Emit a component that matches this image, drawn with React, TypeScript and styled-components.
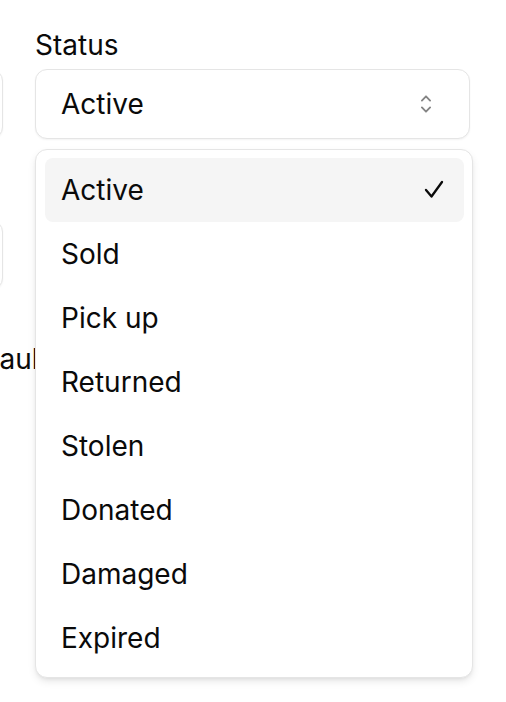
import React from "react";
import styled, { createGlobalStyle } from "styled-components";

const Global = createGlobalStyle`
  html, body {
    margin: 0;
    padding: 0;
    background: #ffffff;
    overflow: hidden;
  }
  body {
    font-family: Inter, "Noto Sans", sans-serif;
    color: #0a0a0a;
    -webkit-font-smoothing: antialiased;
  }
`;

const Form = styled.div`
  display: flex;
  gap: 32px;
  padding-top: 31px;
  width: 506px;
  height: 702px;
  box-sizing: border-box;
`;

const Column = styled.div<{ $width: number; $offset?: number }>`
  display: flex;
  flex-direction: column;
  flex: 0 0 ${(p) => p.$width}px;
  width: ${(p) => p.$width}px;
  margin-left: ${(p) => p.$offset ?? 0}px;
`;

const Field = styled.div<{ $spaceBefore?: number; $spaceAfter?: number }>`
  display: flex;
  flex-direction: column;
  gap: 10px;
  margin-top: ${(p) => p.$spaceBefore ?? 0}px;
  margin-bottom: ${(p) => p.$spaceAfter ?? 0}px;
`;

const Label = styled.label`
  font-size: 28px;
  line-height: 28px;
  font-weight: 400;
  color: #0a0a0a;
`;

const Input = styled.div`
  height: 70px;
  box-sizing: border-box;
  border: 1px solid #e5e5e5;
  border-radius: 12px;
  background: #fff;
  box-shadow: 0 1px 2px rgba(0, 0, 0, 0.05);
`;

const CheckRow = styled.div<{ $indent: number }>`
  padding-left: ${(p) => p.$indent}px;
  font-size: 28px;
  line-height: 48px;
  white-space: nowrap;
`;

const SelectWrap = styled.div`
  position: relative;
`;

const Trigger = styled.button`
  display: flex;
  align-items: center;
  justify-content: space-between;
  width: 100%;
  height: 70px;
  box-sizing: border-box;
  padding: 0 38px 0 25px;
  border: 1px solid #e5e5e5;
  border-radius: 12px;
  background: #fff;
  box-shadow: 0 1px 2px rgba(0, 0, 0, 0.05);
  font-family: Inter, "Noto Sans", sans-serif;
  font-size: 28px;
  color: #0a0a0a;
  text-align: left;
  cursor: pointer;
`;

const Menu = styled.div`
  position: absolute;
  top: calc(100% + 10px);
  left: 0;
  width: 438px;
  box-sizing: border-box;
  padding: 8px 8px 7px 9px;
  display: flex;
  flex-direction: column;
  background: #fff;
  border: 1px solid #e5e5e5;
  border-radius: 12px;
  box-shadow: 0 4px 8px -1px rgba(0, 0, 0, 0.1), 0 2px 4px -2px rgba(0, 0, 0, 0.1);
  z-index: 10;
`;

const Item = styled.div<{ $active?: boolean }>`
  display: flex;
  align-items: center;
  justify-content: space-between;
  height: 64px;
  padding: 0 20px 0 16px;
  border-radius: 8px;
  background: ${(p) => (p.$active ? "#f5f5f5" : "transparent")};
  font-size: 28px;
  line-height: 28px;
  color: #0a0a0a;
`;

const Chevrons = () => (
  <svg width="10" height="18" viewBox="0 0 10 18" fill="none" stroke="#858585" strokeWidth="1.8" strokeLinecap="round" strokeLinejoin="round">
    <polyline points="0.9,5.6 5,1.3 9.1,5.6" />
    <polyline points="0.9,12.4 5,16.7 9.1,12.4" />
  </svg>
);

const CheckIcon = () => (
  <svg width="20" height="20" viewBox="0 0 20 20" fill="none" stroke="#0a0a0a" strokeWidth="2.3" strokeLinecap="round" strokeLinejoin="round">
    <polyline points="2,10 7.5,16.5 18,2" />
  </svg>
);

const options = ["Active", "Sold", "Pick up", "Returned", "Stolen", "Donated", "Damaged", "Expired"];

export default function App() {
  const selected = "Active";
  return (
    <>
      <Global />
      <Form>
        <Column $width={200} $offset={-197}>
          <Field $spaceBefore={38} $spaceAfter={81}>
            <Input />
          </Field>
          <Field $spaceAfter={45}>
            <Input />
          </Field>
          <CheckRow $indent={150}>Default</CheckRow>
        </Column>
        <Column $width={435}>
          <Field>
            <Label>Status</Label>
            <SelectWrap>
              <Trigger type="button">
                <span>{selected}</span>
                <Chevrons />
              </Trigger>
              <Menu role="listbox">
                {options.map((o) => (
                  <Item key={o} $active={o === selected} role="option">
                    <span>{o}</span>
                    {o === selected && <CheckIcon />}
                  </Item>
                ))}
              </Menu>
            </SelectWrap>
          </Field>
        </Column>
      </Form>
    </>
  );
}
